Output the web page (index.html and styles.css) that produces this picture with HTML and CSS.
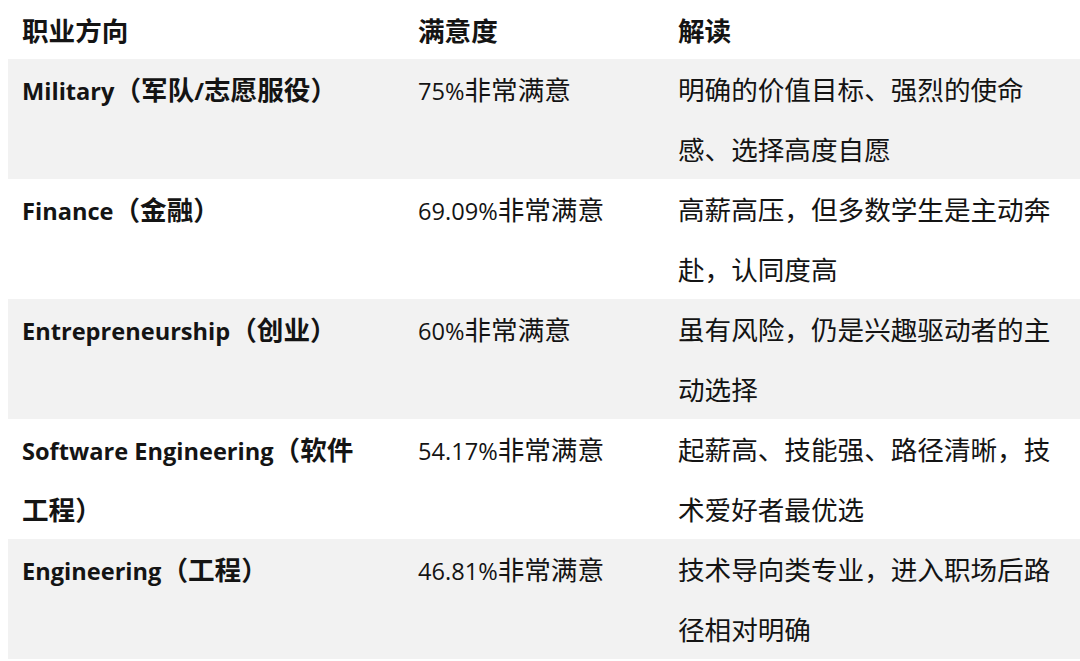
FILE: index.html
```html
<!DOCTYPE html>
<html lang="zh-CN">
<head>
<meta charset="utf-8">
<link rel="stylesheet" href="styles.css">
</head>
<body>
<table class="grid">
  <colgroup>
    <col class="c1"><col class="c2"><col class="c3">
  </colgroup>
  <thead>
    <tr><th>职业方向</th><th>满意度</th><th>解读</th></tr>
  </thead>
  <tbody>
    <tr class="alt"><td class="name"><span class="lat">Military</span>（军队<span class="lat">/</span>志愿服役）</td><td><span class="lat">75%</span>非常满意</td><td>明确的价值目标、强烈的使命感、选择高度自愿</td></tr>
    <tr><td class="name"><span class="lat">Finance</span>（金融）</td><td><span class="lat">69.09%</span>非常满意</td><td>高薪高压，但多数学生是主动奔赴，认同度高</td></tr>
    <tr class="alt"><td class="name"><span class="lat">Entrepreneurship</span>（创业）</td><td><span class="lat">60%</span>非常满意</td><td>虽有风险，仍是兴趣驱动者的主动选择</td></tr>
    <tr><td class="name"><span class="lat">Software Engineering</span>（软件工程）</td><td><span class="lat">54.17%</span>非常满意</td><td>起薪高、技能强、路径清晰，技术爱好者最优选</td></tr>
    <tr class="alt"><td class="name"><span class="lat">Engineering</span>（工程）</td><td><span class="lat">46.81%</span>非常满意</td><td>技术导向类专业，进入职场后路径相对明确</td></tr>
  </tbody>
</table>
</body>
</html>
```

FILE: styles.css
```css
html, body {
  margin: 0;
  padding: 0;
  background: #ffffff;
}
body {
  padding-left: 8px;
  font-family: "Noto Sans CJK SC", sans-serif;
  font-size: 26.6px;
  color: #141414;
}
.grid {
  border-collapse: collapse;
  table-layout: fixed;
  width: 1072px;
}
.c1 { width: 396px; }
.c2 { width: 260px; }
.c3 { width: 416px; }
.grid th, .grid td {
  padding: 0 14px;
  line-height: 60px;
  vertical-align: top;
  text-align: left;
}
.grid th {
  font-weight: 700;
  height: 59px;
  line-height: 59px;
}
.grid td {
  height: 120px;
  font-weight: 400;
}
.grid td.name {
  font-weight: 700;
  padding-right: 28px;
}
.lat {
  font-family: "Open Sans", "Noto Sans CJK SC", sans-serif;
  font-size: 23.6px;
  line-height: 1;
}
.alt {
  background: #f2f2f2;
}
```
